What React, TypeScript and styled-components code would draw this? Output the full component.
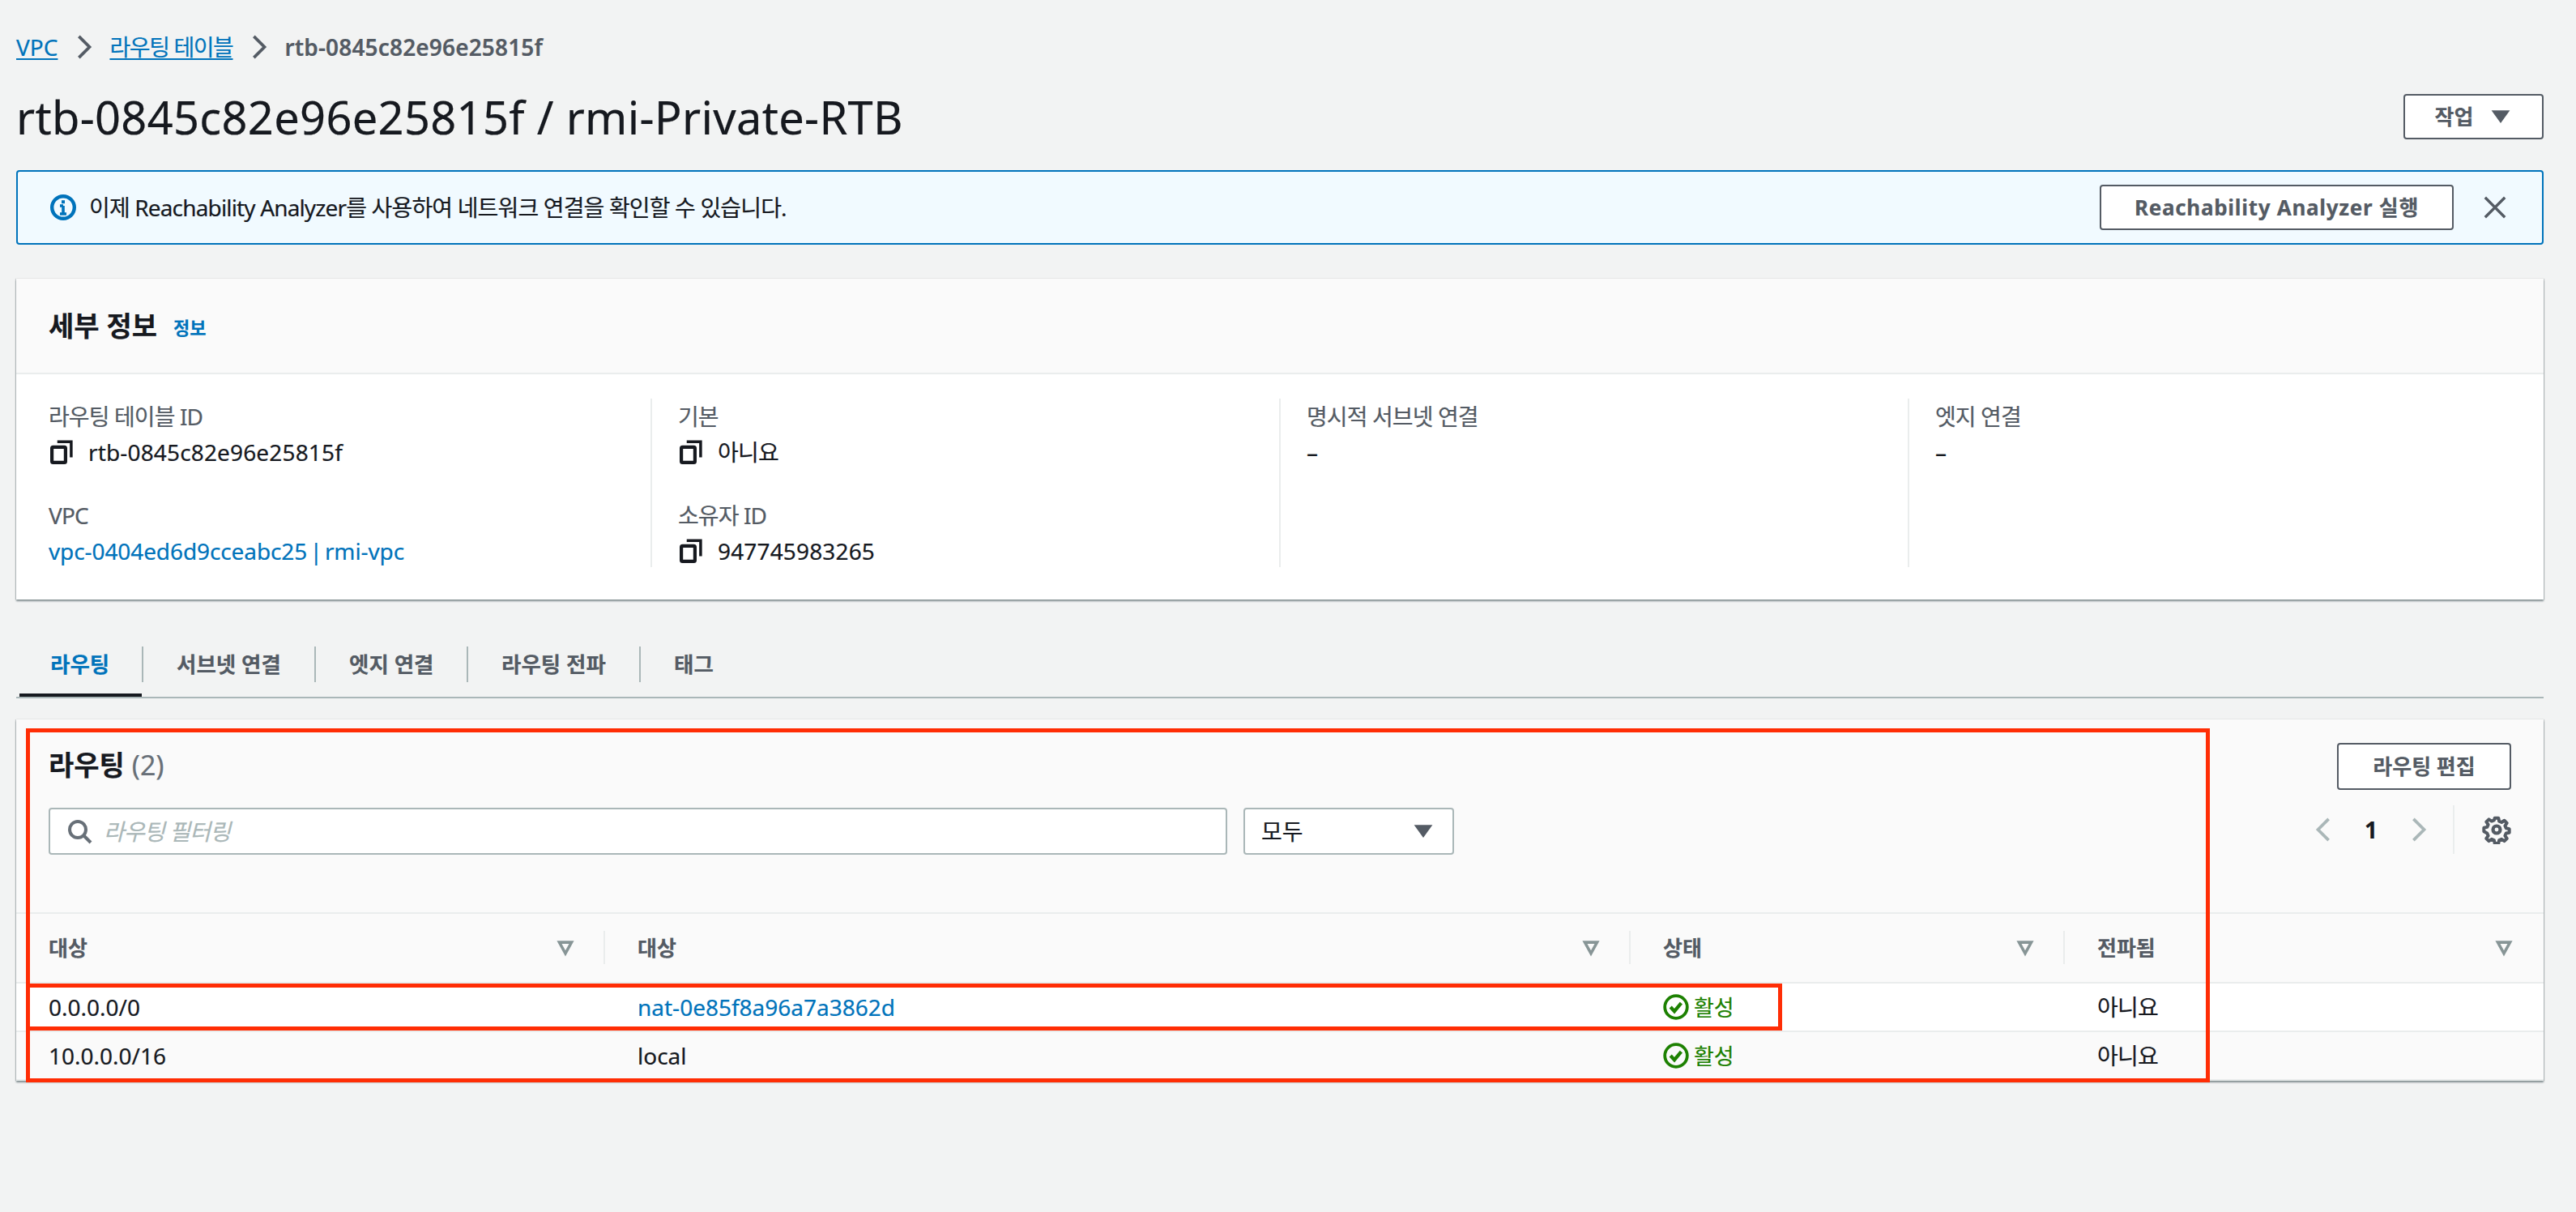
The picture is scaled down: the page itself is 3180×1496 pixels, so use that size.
import React from 'react';
import styled, { createGlobalStyle } from 'styled-components';

const Global = createGlobalStyle`
  html, body { margin: 0; padding: 0; background: #f2f3f3; }
  body { font-family: "Noto Sans", "Noto Sans CJK KR", sans-serif; font-size: 28px; line-height: 40px; color: #16191f; -webkit-text-stroke: 0.2px; }
  * { box-sizing: border-box; }
`;

const Page = styled.div`
  width: 3180px; height: 1496px; padding: 38px 40px 0 20px;
`;
const Breadcrumbs = styled.nav`
  display: flex; align-items: center; height: 40px; gap: 17px;
`;
const CrumbLink = styled.a`
  color: #0073bb; text-decoration: underline; text-underline-offset: 3px; letter-spacing: ${p => p.$ls || 0}px;
`;
const CrumbCurrent = styled.span`
  color: #545b64; font-weight: 600; letter-spacing: 0.15px;
`;
const TitleRow = styled.div`
  display: flex; align-items: center; justify-content: space-between; height: 56px; margin-top: 38px;
`;
const Title = styled.h1`
  margin: 0; font-size: 56px; line-height: 56px; font-weight: 400; color: #16191f; letter-spacing: 0.3px;
`;
const Button = styled.button`
  display: inline-flex; align-items: center; justify-content: center; gap: 20px;
  height: ${p => p.$h || 56}px; width: ${p => p.$w}px; padding: 0;
  border: 2px solid #545b64; border-radius: 4px; background: #fff; color: #545b64;
  font: 700 26px/36px "Noto Sans", "Noto Sans CJK KR", sans-serif;
  letter-spacing: ${p => p.$ls || 0}px;
`;
const Alert = styled.div`
  display: flex; align-items: center; height: 92px; margin-top: 38px; padding: 0 40px 0 40px;
  border: 2px solid #0073bb; border-radius: 4px; background: #f1faff; gap: 16px;
`;
const AlertText = styled.span`
  flex: 1; font-size: 28px; color: #16191f; letter-spacing: -0.85px;
`;
const CloseBtn = styled.span`
  display: flex; margin-left: 20px; margin-right: 3px;
`;
const Card = styled.section`
  position: relative; background: #fff; box-shadow: 0 2px 2px rgba(0,28,36,.45), 1px 0 1px rgba(0,28,36,.15), -1px 0 1px rgba(0,28,36,.15);
`;
const DetailsCard = styled(Card)`
  margin-top: 42px; height: 396px;
`;
const CardHead = styled.header`
  display: flex; align-items: center; gap: 20px; height: 118px; padding: 0 40px; background: #fafafa;
  border-bottom: 2px solid #eaeded;
`;
const CardTitle = styled.h2`
  margin: 0; font-size: 34px; line-height: 44px; font-weight: 700;
`;
const InfoLink = styled.a`
  color: #0073bb; font-size: 22px; font-weight: 700; margin-top: 4px;
`;
const DetailGrid = styled.div`
  display: grid; grid-template-columns: 745px 776px 776px 1fr; padding: 30px 40px 0;
`;
const DetailCol = styled.div`
  display: flex; flex-direction: column; height: 208px; gap: 38px; padding-top: 2px;
  padding-left: ${p => (p.$first ? 0 : 32)}px;
  border-right: ${p => (p.$last ? 'none' : '2px solid #eaeded')};
`;
const Field = styled.div`
  display: flex; flex-direction: column; gap: 4px;
`;
const Label = styled.div`
  color: #545b64; height: 40px; letter-spacing: -0.9px;
`;
const Value = styled.div`
  display: flex; align-items: center; gap: 19px; height: 40px; color: #16191f; letter-spacing: 0.15px;
  svg { margin-left: 2px; }
`;
const Link = styled.a`
  color: #0073bb;
`;
const VpcLink = styled(Link)`
  word-spacing: -4px; letter-spacing: -0.1px;
`;
const Tabs = styled.div`
  display: flex; align-items: flex-start; height: 64px; margin-top: 58px; padding-left: 4px; border-bottom: 2px solid #aab7b8;
`;
const Tab = styled.div`
  position: relative; height: 62px; width: ${p => p.$w}px; padding-left: ${p => (p.$active ? 38 : 41)}px; line-height: 44px;
  font-weight: 700; font-size: 26.5px; color: ${p => (p.$active ? '#0073bb' : '#545b64')};
  &::before {
    content: ""; display: ${p => (p.$last ? 'none' : 'block')}; position: absolute; right: 0; top: 0; width: 2px; height: 44px; background: #aab7b8;
  }
  &::after {
    content: ""; display: ${p => (p.$active ? 'block' : 'none')}; position: absolute; left: 0; right: 2px; bottom: 0; height: 4px; background: #16191f;
  }
`;
const RoutesCard = styled(Card)`
  margin-top: 26px; height: 446px; background: #fafafa;
`;
const RoutesHead = styled.div`
  display: flex; justify-content: space-between; height: 240px; padding: 31px 40px 0;
  border-bottom: 2px solid #eaeded;
`;
const RoutesLeft = styled.div`
  display: flex; flex-direction: column; gap: 28px;
`;
const RoutesTitle = styled.h2`
  margin: 0; font-size: 34px; line-height: 50px; font-weight: 700;
`;
const Count = styled.span`
  color: #687078; font-weight: 400;
`;
const Filters = styled.div`
  display: flex; gap: 20px;
`;
const SearchBox = styled.div`
  display: flex; align-items: center; gap: 14px; width: 1455px; height: 58px; padding-left: 20px;
  border: 2px solid #aab7b8; border-radius: 4px; background: #fff;
`;
const Placeholder = styled.span`
  color: #aab7b8; font-style: italic; letter-spacing: -0.8px;
`;
const SelectBox = styled.div`
  display: flex; align-items: center; justify-content: space-between; width: 260px; height: 58px; padding: 0 22px 0 20px;
  border: 2px solid #aab7b8; border-radius: 4px; background: #fff;
`;
const RoutesRight = styled.div`
  display: flex; flex-direction: column; align-items: flex-end; gap: 19px; margin-top: -2px;
`;
const Pager = styled.div`
  display: flex; align-items: center; height: 60px;
`;
const PageNum = styled.span`
  width: 44px; text-align: center; font-weight: 700; margin: 0 21px 0 21px;
`;
const PagerSep = styled.div`
  width: 2px; height: 60px; background: #eaeded; margin: 0 34px 0 28px;
`;
const Row = styled.div`
  display: grid; grid-template-columns: 727px 1266px 536px 1fr; align-items: center;
  height: ${p => p.$h}px; background: ${p => p.$bg}; border-bottom: 2px solid #eaeded;
`;
const HeadCell = styled.div`
  position: relative; display: flex; align-items: center; justify-content: space-between; height: 100%;
  padding: 0 38px 0 40px; color: #545b64; font-weight: 700; font-size: 26px;
  &::after {
    content: ""; display: ${p => (p.$last ? 'none' : 'block')}; position: absolute; right: 0; top: 21px; bottom: 22px; width: 2px; background: #eaeded;
  }
`;
const Cell = styled.div`
  display: flex; align-items: center; gap: 6px; padding-left: 40px;
`;
const Korean = styled.span`
  letter-spacing: -0.8px;
`;
const Status = styled.span`
  color: #1d8102; font-size: 27px; padding-top: 2px;
`;
const Annotation = styled.div`
  position: absolute; left: 12px; top: ${p => p.$top}px; width: ${p => p.$w}px; height: ${p => p.$h}px;
  border: 5px solid #ff2d05; pointer-events: none;
`;

const Chevron = ({ dir = 'right', color = '#545b64', size = 30 }: { dir?: string; color?: string; size?: number }) => (
  <svg width={size} height={size} viewBox="0 0 16 16" fill="none" stroke={color} strokeWidth="2">
    <path d={dir === 'right' ? 'M5 1l7 7-7 7' : 'M11 1L4 8l7 7'} />
  </svg>
);
const Caret = ({ color = '#545b64' }: { color?: string }) => (
  <svg width="28" height="28" viewBox="0 0 16 16"><path d="M1.5 3.5h13L8 12.5z" fill={color} /></svg>
);
const FilterCaret = () => (
  <svg width="22" height="22" viewBox="0 0 16 16" fill="none" stroke="#879596" strokeWidth="2.6"><path d="M2.5 3h11L8 13z" /></svg>
);
const Copy = () => (
  <svg width="28" height="30" viewBox="0 0 16 17" fill="none" stroke="#16191f" strokeWidth="2.4">
    <rect x="1.2" y="5" width="9.6" height="10.8" rx="0.8" />
    <path d="M5 1.2h9.8v11" strokeWidth="2" />
  </svg>
);
const InfoIcon = () => (
  <svg width="32" height="32" viewBox="0 0 16 16" fill="none" stroke="#0073bb" strokeWidth="2.2">
    <circle cx="8" cy="8" r="6.9" />
    <path d="M8 7v5M6 12h4M6 7h2" strokeWidth="1.8" />
    <path d="M7 3.6h2v2H7z" fill="#0073bb" stroke="none" />
  </svg>
);
const Close = () => (
  <svg width="30" height="30" viewBox="0 0 16 16" fill="none" stroke="#545b64" strokeWidth="1.8"><path d="M1.5 1.5l13 13M14.5 1.5l-13 13" /></svg>
);
const Search = () => (
  <svg width="32" height="32" viewBox="0 0 16 16" fill="none" stroke="#687078" strokeWidth="2"><circle cx="7" cy="7" r="5" /><path d="M10.5 10.5L15 15" /></svg>
);
const Gear = () => (
  <svg width="36" height="36" viewBox="0 0 24 24" fill="none" stroke="#545b64" strokeWidth="2.8" strokeLinejoin="round">
    <path d="M10.4 2h3.2l.6 2.8 2.1.9 2.4-1.6 2.2 2.2-1.6 2.4.9 2.1 2.8.6v3.2l-2.8.6-.9 2.1 1.6 2.4-2.2 2.2-2.4-1.6-2.1.9-.6 2.8h-3.2l-.6-2.8-2.1-.9-2.4 1.6-2.2-2.2 1.6-2.4-.9-2.1L1 13.6v-3.2l2.8-.6.9-2.1-1.6-2.4 2.2-2.2 2.4 1.6 2.1-.9z" transform="translate(.6 .6) scale(.95)" />
    <circle cx="12" cy="12" r="3" />
  </svg>
);
const Check = () => (
  <svg width="32" height="32" viewBox="0 0 16 16" fill="none" stroke="#1d8102" strokeWidth="1.9">
    <circle cx="8" cy="8" r="6.9" />
    <path d="M4.6 8l2.4 2.6 4.2-5" strokeWidth="2.1" />
  </svg>
);

const App = () => (
  <Page>
    <Global />
    <Breadcrumbs>
      <CrumbLink>VPC</CrumbLink>
      <Chevron />
      <CrumbLink $ls={-1.4}>라우팅 테이블</CrumbLink>
      <Chevron />
      <CrumbCurrent>rtb-0845c82e96e25815f</CrumbCurrent>
    </Breadcrumbs>
    <TitleRow>
      <Title>rtb-0845c82e96e25815f / rmi-Private-RTB</Title>
      <Button $w={173}>작업 <Caret /></Button>
    </TitleRow>
    <Alert>
      <InfoIcon />
      <AlertText>이제 Reachability Analyzer를 사용하여 네트워크 연결을 확인할 수 있습니다.</AlertText>
      <Button $w={437} $ls={0.7}>Reachability Analyzer 실행</Button>
      <CloseBtn><Close /></CloseBtn>
    </Alert>
    <DetailsCard>
      <CardHead>
        <CardTitle>세부 정보</CardTitle>
        <InfoLink>정보</InfoLink>
      </CardHead>
      <DetailGrid>
        <DetailCol $first>
          <Field><Label>라우팅 테이블 ID</Label><Value><Copy />rtb-0845c82e96e25815f</Value></Field>
          <Field><Label>VPC</Label><Value><VpcLink>vpc-0404ed6d9cceabc25 | rmi-vpc</VpcLink></Value></Field>
        </DetailCol>
        <DetailCol>
          <Field><Label>기본</Label><Value><Copy /><Korean>아니요</Korean></Value></Field>
          <Field><Label>소유자 ID</Label><Value><Copy />947745983265</Value></Field>
        </DetailCol>
        <DetailCol>
          <Field><Label>명시적 서브넷 연결</Label><Value>–</Value></Field>
        </DetailCol>
        <DetailCol $last>
          <Field><Label>엣지 연결</Label><Value>–</Value></Field>
        </DetailCol>
      </DetailGrid>
    </DetailsCard>
    <Tabs>
      <Tab $active $w={153}>라우팅</Tab>
      <Tab $w={213}>서브넷 연결</Tab>
      <Tab $w={188}>엣지 연결</Tab>
      <Tab $w={213}>라우팅 전파</Tab>
      <Tab $w={120} $last>태그</Tab>
    </Tabs>
    <RoutesCard>
      <RoutesHead>
        <RoutesLeft>
          <RoutesTitle>라우팅 <Count>(2)</Count></RoutesTitle>
          <Filters>
            <SearchBox><Search /><Placeholder>라우팅 필터링</Placeholder></SearchBox>
            <SelectBox>모두 <Caret /></SelectBox>
          </Filters>
        </RoutesLeft>
        <RoutesRight>
          <Button $w={215} $h={58}>라우팅 편집</Button>
          <Pager>
            <Chevron dir="left" color="#aab7b8" />
            <PageNum>1</PageNum>
            <Chevron color="#aab7b8" />
            <PagerSep />
            <Gear />
          </Pager>
        </RoutesRight>
      </RoutesHead>
      <Row $h={86} $bg="#fafafa">
        <HeadCell>대상 <FilterCaret /></HeadCell>
        <HeadCell>대상 <FilterCaret /></HeadCell>
        <HeadCell>상태 <FilterCaret /></HeadCell>
        <HeadCell $last>전파됨 <FilterCaret /></HeadCell>
      </Row>
      <Row $h={60} $bg="#fff">
        <Cell>0.0.0.0/0</Cell>
        <Cell><Link>nat-0e85f8a96a7a3862d</Link></Cell>
        <Cell><Check /><Status>활성</Status></Cell>
        <Cell><Korean>아니요</Korean></Cell>
      </Row>
      <Row $h={60} $bg="#fafafa">
        <Cell>10.0.0.0/16</Cell>
        <Cell>local</Cell>
        <Cell><Check /><Status>활성</Status></Cell>
        <Cell><Korean>아니요</Korean></Cell>
      </Row>
      <Annotation $top={11} $w={2696} $h={437} />
      <Annotation $top={326} $w={2168} $h={58} />
    </RoutesCard>
  </Page>
);

export default App;
